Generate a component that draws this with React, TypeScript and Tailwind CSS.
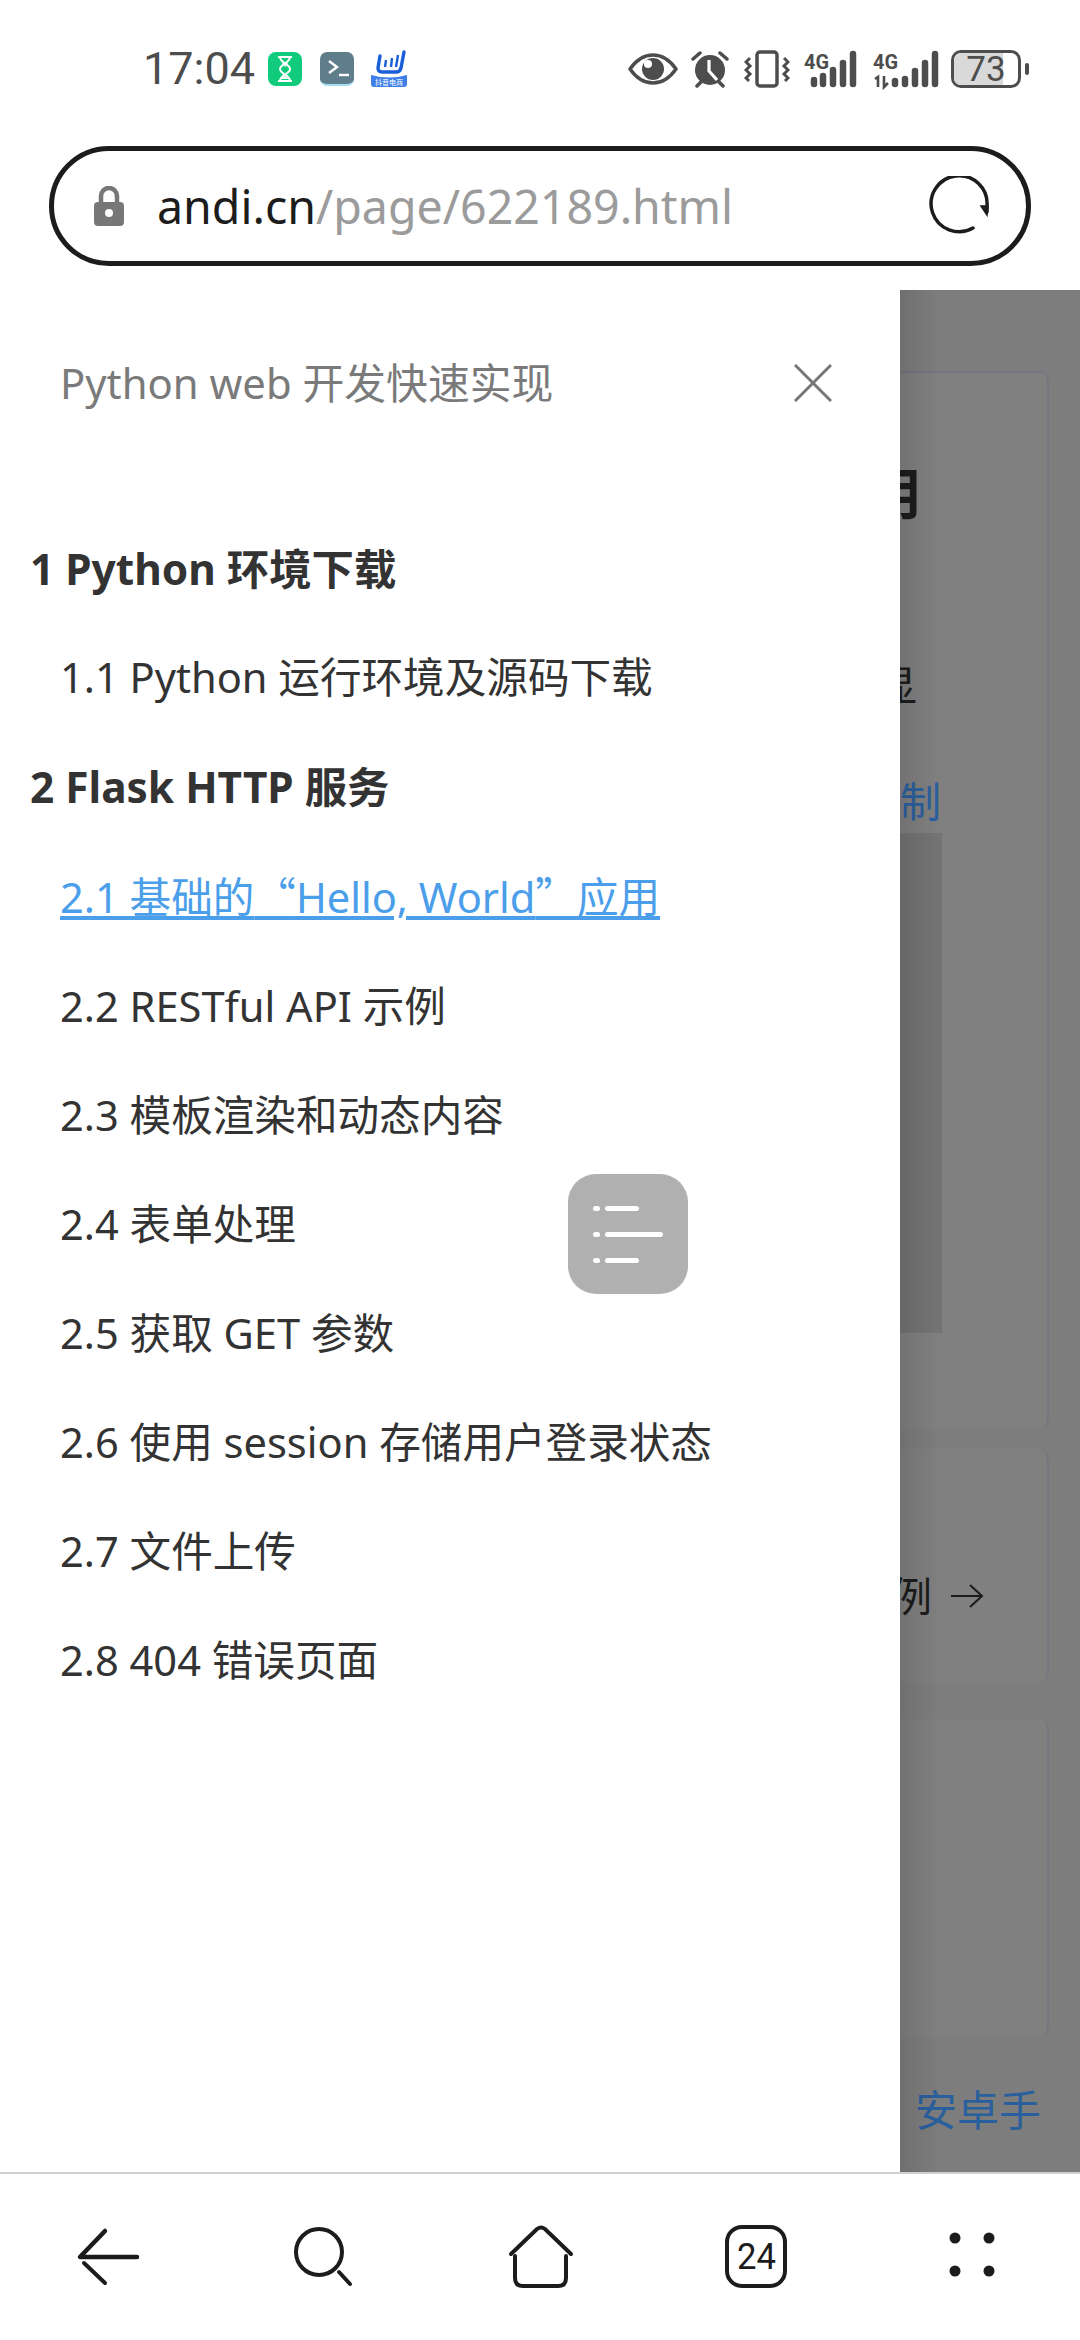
import React from 'react';

const cjk = "font-['Noto_Sans_CJK_SC',sans-serif]";

const tocItems: { key: string; label: React.ReactNode; bold?: boolean; active?: boolean }[] = [
  { key: '1', label: '1 Python 环境下载', bold: true },
  { key: '1.1', label: '1.1 Python 运行环境及源码下载' },
  { key: '2', label: '2 Flask HTTP 服务', bold: true },
  {
    key: '2.1',
    label: (
      <>
        2.1 基础的<span className={cjk}>“</span>Hello, World<span className={cjk}>”</span>应用
      </>
    ),
    active: true,
  },
  { key: '2.2', label: '2.2 RESTful API 示例' },
  { key: '2.3', label: '2.3 模板渲染和动态内容' },
  { key: '2.4', label: '2.4 表单处理' },
  { key: '2.5', label: '2.5 获取 GET 参数' },
  { key: '2.6', label: '2.6 使用 session 存储用户登录状态' },
  { key: '2.7', label: '2.7 文件上传' },
  { key: '2.8', label: '2.8 404 错误页面' },
];

const StatusIcons = () => (
  <div className="flex items-center">
    {/* eye */}
    <svg width="50" height="34" viewBox="0 0 50 34">
      <path d="M2 17C9 7 16 3 25 3s16 4 23 14c-7 10-14 14-23 14S9 27 2 17z" fill="none" stroke="#4d4d4d" strokeWidth="3.5" strokeLinejoin="round" />
      <circle cx="25" cy="17" r="11" fill="#4d4d4d" />
      <circle cx="20" cy="12" r="4" fill="#fff" />
    </svg>
    {/* alarm */}
    <svg width="40" height="38" viewBox="0 0 40 38" className="ml-[12px]">
      <circle cx="20" cy="20" r="15" fill="#4d4d4d" />
      <path d="M19 10v11l8 9" fill="none" stroke="#fff" strokeWidth="3.2" />
      <path d="M3 9l7-6M37 9l-7-6M7 36l4-4M33 36l-4-4" stroke="#4d4d4d" strokeWidth="3.5" strokeLinecap="round" />
    </svg>
    {/* vibrate */}
    <svg width="46" height="38" viewBox="0 0 46 38" className="ml-[14px]">
      <rect x="13" y="2" width="20" height="34" rx="3" fill="none" stroke="#4d4d4d" strokeWidth="3.5" />
      <path d="M6 8L2 12l4 4-4 4 4 4-4 4 3 3M40 8l4 4-4 4 4 4-4 4 4 4-3 3" fill="none" stroke="#4d4d4d" strokeWidth="3" />
    </svg>
    {/* 4G signal */}
    <svg width="56" height="38" viewBox="0 0 56 38" className="ml-[13px] overflow-visible">
      <text x="1" y="19" fontSize="21" fontWeight="700" fill="#4d4d4d" fontFamily="Roboto, sans-serif" textLength="25" lengthAdjust="spacingAndGlyphs">4G</text>
      <g stroke="#4d4d4d" strokeWidth="6.5" strokeLinecap="round">
        <path d="M11 30v4M20 26v8M30 20v14M40 13v21M50 4v30" />
      </g>
    </svg>
    <svg width="66" height="38" viewBox="0 0 66 38" className="ml-[13px] overflow-visible">
      <text x="1" y="19" fontSize="21" fontWeight="700" fill="#4d4d4d" fontFamily="Roboto, sans-serif" textLength="25" lengthAdjust="spacingAndGlyphs">4G</text>
      <path d="M3 29l3-2v10M12 26v11l4-4" fill="none" stroke="#4d4d4d" strokeWidth="2.6" />
      <g stroke="#4d4d4d" strokeWidth="6.5" strokeLinecap="round">
        <path d="M23 31v3M33 29v5M43 21v13M53 13v21M63 4v30" />
      </g>
    </svg>
    {/* battery */}
    <div className="relative ml-[13px] flex h-[38px] w-[70px] items-center justify-center rounded-[10px] border-[3px] border-[#4d4d4d] font-['Roboto',sans-serif] text-[35px] leading-none text-[#4d4d4d]">
      <div className="absolute inset-y-0 left-0 w-[76%] rounded-l-[7px] bg-[#d9d9d9]" />
      <span className="relative">73</span>
    </div>
    <div className="ml-[4px] h-[12px] w-[4px] rounded-full bg-[#4d4d4d]" />
  </div>
);

const NavBar = () => (
  <div className="flex h-[168px] shrink-0 items-start border-t-2 border-[#cfcfcf] bg-white">
    <svg width="1080" height="166" viewBox="0 2174 1080 166" fill="none" stroke="#1c1c1c" strokeLinecap="round">
      {/* back */}
      <path d="M105 2231L80 2257h57" strokeWidth="4.5" strokeLinejoin="round" />
      <path d="M84 2263l21 20" strokeWidth="4" />
      {/* search */}
      <circle cx="319" cy="2252" r="23" strokeWidth="4" />
      <path d="M339 2272l11 12" strokeWidth="4" />
      {/* home */}
      <path d="M511 2254l26-25q4-3 8 0l26 25" strokeWidth="4" />
      <path d="M515 2256v22q0 8 8 8h35q8 0 8-8v-22" strokeWidth="4" />
      {/* dots */}
      <g fill="#1c1c1c" stroke="none">
        <circle cx="955" cy="2238" r="5.5" />
        <circle cx="989" cy="2238" r="5.5" />
        <circle cx="955" cy="2271" r="5.5" />
        <circle cx="989" cy="2271" r="5.5" />
      </g>
      {/* tabs */}
      <rect x="727" y="2227" width="58" height="59" rx="15" strokeWidth="4" />
      <text x="737" y="2269" fontSize="37" fill="#1c1c1c" stroke="none" fontFamily="Roboto, sans-serif" textLength="39" lengthAdjust="spacingAndGlyphs">24</text>
    </svg>
  </div>
);

const App: React.FC = () => {
  return (
    <div className="flex h-[2340px] w-[1080px] flex-col overflow-hidden bg-white font-['Noto_Sans','Noto_Sans_CJK_SC',sans-serif]">
      {/* status bar */}
      <div className="flex h-[146px] shrink-0 items-start justify-between pl-[143px] pr-[51px] pt-[50px]">
        <div className="flex items-center">
          <span className="font-['Roboto',sans-serif] text-[45px] leading-[38px] text-[#4d4d4d]">17:04</span>
          <div className="ml-[13px] flex h-[34px] w-[34px] items-center justify-center rounded-[8px] bg-[#0fcb7b]">
            <svg width="18" height="26" viewBox="0 0 18 26" fill="none" stroke="#fff" strokeWidth="2">
              <path d="M2 1h14M2 25h14M4 1c0 6 10 7 10 12S4 19 4 25M14 1c0 6-10 7-10 12s10 6 10 12" />
              <path d="M6 7h6l-3 4zM5 23l4-3 4 3z" fill="#fff" stroke="none" />
            </svg>
          </div>
          <div className="ml-[18px] flex h-[34px] w-[34px] items-center rounded-[7px] border-b-2 border-[#a8dcef] bg-[#607d8b] pl-[8px]">
            <svg width="22" height="18" viewBox="0 0 22 18" fill="none" stroke="#fff" strokeWidth="2.4">
              <path d="M1 2l8 6-8 6" />
              <path d="M11 16h10" />
            </svg>
          </div>
          <svg width="38" height="38" viewBox="0 0 38 38" className="ml-[16px]">
            <path d="M10 6L8 18q0 4 4 4h14q4 0 5-4l3-16" fill="none" stroke="#1a5fd8" strokeWidth="3.4" strokeLinecap="round" />
            <path d="M16 10l-1 7M22 8l-1 9M28 5l-2 12" stroke="#1a5fd8" strokeWidth="2.4" />
            <path d="M1 25q18 5 36 0v9q0 3-3 3H4q-3 0-3-3z" fill="#3f7fe8" />
            <text x="19" y="35" textAnchor="middle" fontSize="7" fill="#fff">抖音电商</text>
          </svg>
        </div>
        <StatusIcons />
      </div>

      {/* address bar */}
      <div className="mx-[49px] flex h-[120px] shrink-0 items-center rounded-full border-[5px] border-[#1c1c1c] pl-[39px] pr-[37px]">
        <svg width="32" height="40" viewBox="0 0 32 40">
          <path d="M8 18v-8a8 8 0 0116 0v8" fill="none" stroke="#777" strokeWidth="4.5" />
          <rect x="1" y="16" width="30" height="24" rx="4" fill="#777" />
          <circle cx="16" cy="27" r="4" fill="#fff" />
        </svg>
        <div className="ml-[32px] flex-1 text-[46.5px] leading-none">
          <span className="text-[#1c1c1c]">andi.cn</span>
          <span className="text-[#9b9b9b]">/page/622189.html</span>
        </div>
        <svg width="60" height="60" viewBox="0 0 60 60" fill="none" stroke="#1c1c1c" strokeWidth="3.5" strokeLinecap="round">
          <path d="M44 52A28 28 0 1 1 58 30v6" />
          <path d="M52 30l6 9 1-9z" fill="#1c1c1c" strokeWidth="1.5" />
        </svg>
      </div>

      {/* drawer + dimmed page */}
      <div className="mt-[24px] flex min-h-0 flex-1">
        <div className="relative w-[900px] shrink-0 bg-white">
          <div className="flex h-[186px] items-center justify-between pl-[60px] pr-[68px]">
            <span className="text-[41.8px] leading-none text-[#7a7a7a]">Python web 开发快速实现</span>
            <svg width="38" height="38" viewBox="0 0 38 38" stroke="#777" strokeWidth="3" fill="none">
              <path d="M1 1l36 36M37 1L1 37" />
            </svg>
          </div>
          <ul className="mt-[38px]">
            {tocItems.map((item) => (
              <li
                key={item.key}
                className={
                  item.bold
                    ? 'pl-[30px] text-[42.4px] font-bold leading-[109px] text-[#333333]'
                    : item.active
                      ? 'pl-[60px] text-[41.6px] leading-[109px] text-[#4a9eea] underline underline-offset-[3px]'
                      : 'pl-[60px] text-[41.6px] leading-[109px] text-[#333333]'
                }
              >
                {item.label}
              </li>
            ))}
          </ul>
          <div className="absolute left-[568px] top-[884px] flex h-[120px] w-[120px] flex-col justify-center gap-[21px] rounded-[28px] bg-[#b0b0b0] pl-[25px]">
            {[34, 58, 34].map((w, i) => (
              <div key={i} className="flex items-center gap-[5px]">
                <div className="h-[5px] w-[7px] rounded-full bg-white" />
                <div className="h-[5px] rounded-full bg-white" style={{ width: w }} />
              </div>
            ))}
          </div>
        </div>

        {/* what's left of the page under the overlay */}
        <div className="relative flex w-[180px] flex-col overflow-hidden bg-[#7d7d7d] pt-[81px]">
          <div className="h-[1058px] w-[149px] shrink-0 overflow-hidden rounded-r-[10px] border-r-2 border-t-2 border-[#767680] bg-[#808080]">
            <div className="-ml-[34px] mt-[91px] text-[56px] font-bold leading-[56px] text-[#1c1c1c]">用</div>
            <div className="-ml-[25px] mt-[143px] text-[42px] leading-[44px] text-[#1c1c1c]">显</div>
            <div className="mt-[72px] text-[41px] leading-[44px] text-[#2a5f9e]">制</div>
            <div className="mt-[10px] h-[500px] w-[42px] bg-[#747474]" />
          </div>
          <div className="mt-[20px] flex h-[234px] w-[149px] shrink-0 items-center overflow-hidden rounded-r-[10px] border-r-2 border-[#767680] bg-[#808080] pt-[60px]">
            <span className="-ml-[9px] text-[41px] leading-none text-[#1c1c1c]">例</span>
            <svg width="34" height="26" viewBox="0 0 34 26" fill="none" stroke="#1c1c1c" strokeWidth="2" className="ml-[18px]">
              <path d="M1 13h31M20 2l12 11-12 11" />
            </svg>
          </div>
          <div className="mt-[36px] h-[318px] w-[149px] shrink-0 rounded-r-[10px] border-r-2 border-[#767680] bg-[#808080]" />
          <div className="mt-[51px] pl-[15px] text-[42px] leading-[44px] text-[#2a5f9e]">安卓手</div>
          <div className="absolute inset-y-0 left-0 w-[40px] bg-gradient-to-r from-[#0000001c] to-transparent" />
        </div>
      </div>

      <NavBar />
    </div>
  );
};

export default App;
